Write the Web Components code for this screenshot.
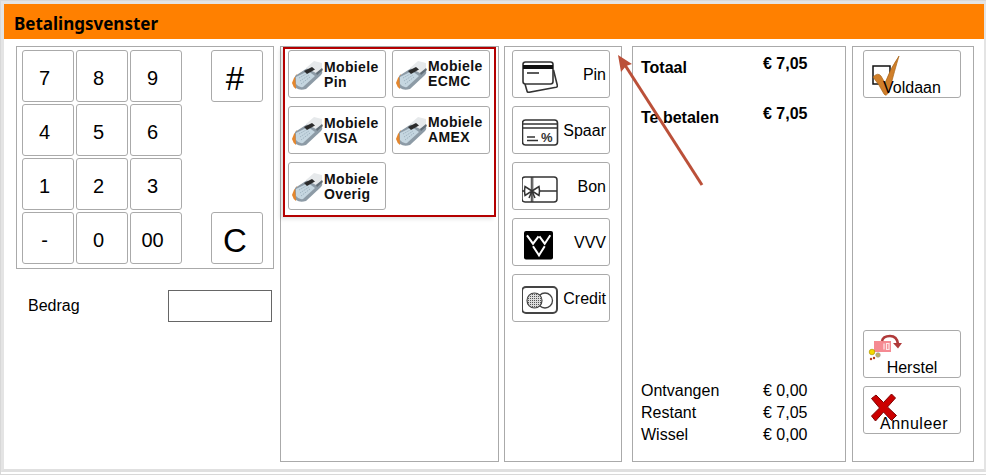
<!DOCTYPE html>
<html>
<head>
<meta charset="utf-8">
<title>Betalingsvenster</title>
<style>
  html, body { margin: 0; background: #fff; height: 100%; overflow: hidden; }
  body { font-family: "Liberation Sans", Arial, sans-serif; color: #000; }
</style>
</head>
<body>

<pay-window title-text="Betalingsvenster">
  <pay-panel style="width:258px">
    <key-pad></key-pad>
    <amount-field slot="after" label="Bedrag"></amount-field>
  </pay-panel>

  <pay-panel style="width:219px; margin-left:6px">
    <mobile-group>
      <mobile-button line="Pin"></mobile-button>
      <mobile-button line="ECMC" nudge></mobile-button>
      <mobile-button line="VISA"></mobile-button>
      <mobile-button line="AMEX" nudge></mobile-button>
      <mobile-button line="Overig"></mobile-button>
    </mobile-group>
  </pay-panel>

  <pay-panel style="width:118px; margin-left:5px">
    <method-list>
      <method-button label="Pin">
        <svg slot="icon" style="margin-top:10px" width="36" height="32" viewBox="0 0 36 32" fill="none" stroke="#333" stroke-width="1.600">
          <path d="M3 23l2 7q.4 1.600 2 1.300l27-5q1.700-.4 1.300-2L31.500 9"/>
          <rect x="1" y="1" width="30" height="22" rx="2.500" fill="#fff"/>
          <rect x="1" y="4" width="30" height="4" fill="#111" stroke="none"/>
          <path d="M5 12h12"/>
        </svg>
      </method-button>
      <method-button label="Spaar">
        <svg slot="icon" style="margin-top:12px" width="38" height="28" viewBox="0 0 38 28" fill="none" stroke="#333" stroke-width="1.600">
          <rect x=".5" y="1" width="35" height="25" rx="3"/>
          <path d="M.5 5h35M.5 9h35"/>
          <path d="M5 18h8M5 21.500h11" stroke-width="1.300"/>
          <text x="19" y="23" font-family="Liberation Sans" font-weight="700" font-size="13" fill="#333" stroke="none">%</text>
        </svg>
      </method-button>
      <method-button label="Bon">
        <svg slot="icon" style="margin-top:13px" width="38" height="28" viewBox="0 0 38 28" fill="none" stroke="#333" stroke-width="1.500">
          <rect x="0" y="1" width="35" height="25" rx="3"/>
          <path d="M9.300 1v25M10.800 1v25" stroke-width="1"/>
          <path d="M18 15h17M0 15h3"/>
          <path d="M10 15L3 10.500q-1 4.500 0 9zM10 15l7-4.500q1 4.500 0 9zM10 15l-3 7M10 15l3 7" fill="#fff"/>
        </svg>
      </method-button>
      <method-button label="VVV">
        <svg slot="icon" style="margin-top:12px" width="38" height="30" viewBox="0 0 38 30">
          <rect x="2" y="0" width="29" height="28.500" rx="2" fill="#000"/>
          <g fill="none" stroke="#fff" stroke-width="2">
            <path d="M5 4.300l6 8.400 5.600-7.400"/>
            <path d="M17.400 5.300l5.300 7.400 5.600-8.400"/>
            <path d="M11 15.300l6 9 5.700-9"/>
          </g>
        </svg>
      </method-button>
      <method-button label="Credit">
        <svg slot="icon" style="margin-top:11px" width="38" height="28" viewBox="0 0 38 28" fill="none">
          <defs>
            <pattern id="dots" width="2" height="2" patternUnits="userSpaceOnUse">
              <rect width="2" height="2" fill="#ddd"/>
              <rect width="1" height="1" fill="#555"/>
            </pattern>
          </defs>
          <rect x="0" y="1" width="35" height="26" rx="4" stroke="#444" stroke-width="2"/>
          <circle cx="23" cy="14.500" r="7.500" stroke="#444" stroke-width="1.300"/>
          <circle cx="12.500" cy="14.500" r="7.500" fill="url(#dots)" stroke="#444" stroke-width="1.200"/>
        </svg>
      </method-button>
    </method-list>
  </pay-panel>

  <pay-panel style="width:214px; margin-left:10px">
    <pay-summary></pay-summary>
  </pay-panel>

  <pay-panel style="width:122px; margin-left:6px">
    <action-list>
      <action-button label="Voldaan">
        <svg slot="icon" width="36" height="44" viewBox="0 0 36 44">
          <rect x="2" y="13" width="17" height="18" fill="#fff" stroke="#111" stroke-width="1.500"/>
          <path d="M2 24Q7 19 10 23L14 30Q20 14 28 3Q24 16 18 39Q15 44 13 41Q8 31 2 24z" fill="#d07f2a" stroke="#a86418" stroke-width=".7"/>
        </svg>
      </action-button>
      <action-button slot="bottom" label="Herstel">
        <svg slot="icon" width="36" height="36" viewBox="0 0 36 36" style="overflow:visible">
          <rect x="3" y="8" width="17" height="11" fill="#f58a92"/>
          <path d="M13 10.500v6M15.500 10.500h2.500v6h-2.500z" fill="none" stroke="#fde6e8" stroke-width="1.200"/>
          <path d="M11 8Q12 3 19 3Q26 3 27 11" fill="none" stroke="#b03a3a" stroke-width="2.600"/>
          <path d="M22 10h9l-4 5.500z" fill="#b03a3a"/>
          <circle cx="1" cy="19" r="2.800" fill="#f5d800" stroke="#a08a00" stroke-width=".6"/>
          <circle cx="7" cy="22" r="2.300" fill="#c0b060" stroke="#999" stroke-width=".6"/>
          <circle cx="0" cy="26" r="1.200" fill="#b33c1d"/>
          <circle cx="3" cy="25" r="1.200" fill="#b33c1d"/>
        </svg>
      </action-button>
      <action-button slot="bottom" label="Annuleer" spaced>
        <svg slot="icon" width="36" height="36" viewBox="0 0 36 36">
          <path transform="translate(-2.500 4)" d="M3 5.500L7.500 2 15 9.500 23 1l4 4-8 9 9 8.500-5 5-8-8.500-8 9-4-5 8-8z" fill="#cc0000" stroke="#7e0000" stroke-width="1"/>
        </svg>
      </action-button>
    </action-list>
  </pay-panel>

  <pay-arrow slot="overlay"></pay-arrow>
</pay-window>

<script>
class PayWindow extends HTMLElement {
  constructor() {
    super();
    this.attachShadow({ mode: "open" });
    this.shadowRoot.innerHTML = `
    <style>
      :host {
        display: block;
        width: 986px;
        height: 475px;
        box-sizing: border-box;
        position: relative;
        border: 1px solid #d8d8d8;
        border-right: none;
        background: #fff;
      }
      #inner {
        height: 471px;
        box-sizing: border-box;
        border: 3px solid #e4e4e4;
        border-right-width: 2px;
        border-bottom: 3px solid #e0e0e0;
        display: flex;
        flex-direction: column;
      }
      header {
        background: #ff8000;
        height: 35px;
        flex: none;
        padding-left: 10px;
        font: 700 17px/40px "Noto Sans", Tahoma, sans-serif;
        color: #000;
      }
      #panels {
        display: flex;
        padding: 7px 0 0 12px;
      }
    </style>
    <div id="inner">
      <header></header>
      <div id="panels"><slot></slot></div>
    </div>
    <slot name="overlay"></slot>
    `;
    this.shadowRoot.querySelector("header").textContent = this.getAttribute("title-text");
  }
}

class PayPanel extends HTMLElement {
  constructor() {
    super();
    this.attachShadow({ mode: "open" });
    this.shadowRoot.innerHTML = `
    <style>
      :host { display: flex; flex-direction: column; flex: none; }
      #box { flex: none; border: 1px solid #aaa; }
      :host(:not(:first-child)) #box { height: 414px; }
    </style>
    <div id="box"><slot></slot></div>
    <slot name="after"></slot>
    `;
  }
}

class KeyPad extends HTMLElement {
  constructor() {
    super();
    this.attachShadow({ mode: "open" });
    this.shadowRoot.innerHTML = `
    <style>
      :host {
        display: grid;
        grid-template-columns: 52px 52px 52px 1fr;
        grid-auto-rows: 52px;
        gap: 2px;
        padding: 3px 4px 4px 5px;
      }
      .side { margin-left: 27px; }
    </style>
    `;
    const keys = ["7", "8", "9", "#", "4", "5", "6", "", "1", "2", "3", "", "-", "0", "00", "C"];
    keys.forEach((k) => {
      if (k === "") {
        this.shadowRoot.appendChild(document.createElement("span"));
        return;
      }
      const key = document.createElement("pad-key");
      key.textContent = k;
      if (k === "#" || k === "C") {
        key.setAttribute("big", "");
        key.className = "side";
      }
      this.shadowRoot.appendChild(key);
    });
  }
}

class PadKey extends HTMLElement {
  constructor() {
    super();
    this.attachShadow({ mode: "open" });
    this.shadowRoot.innerHTML = `
    <style>
      :host {
        display: flex;
        width: 52px;
        height: 52px;
        box-sizing: border-box;
        align-items: center;
        justify-content: center;
        border: 1px solid #aaa;
        border-radius: 3px;
        background: #fff;
        font-size: 20px;
        padding: 4px 7px 0 0;
      }
      :host([big]) { font-size: 33px; padding: 5px 4px 0 0; }
    </style>
    <slot></slot>
    `;
  }
}

class AmountField extends HTMLElement {
  constructor() {
    super();
    this.attachShadow({ mode: "open" });
    this.shadowRoot.innerHTML = `
    <style>
      :host {
        display: flex;
        align-items: center;
        justify-content: space-between;
        width: 244px;
        margin: 21px 0 0 12px;
        font-size: 16px;
      }
      #value {
        width: 102px;
        height: 30px;
        border: 1px solid #666;
        background: #fff;
      }
    </style>
    <label></label>
    <div id="value"></div>
    `;
    this.shadowRoot.querySelector("label").textContent = this.getAttribute("label");
  }
}

class MobileGroup extends HTMLElement {
  constructor() {
    super();
    this.attachShadow({ mode: "open" });
    this.shadowRoot.innerHTML = `
    <style>
      :host {
        display: grid;
        grid-template-columns: 98px 98px;
        grid-auto-rows: 48px;
        column-gap: 6px;
        row-gap: 8px;
        width: 213px;
        height: 170px;
        box-sizing: border-box;
        margin: 0 0 0 2px;
        padding: 1px 0 0 3px;
        border: 2px solid #b40000;
        box-shadow: -3px 2px 4px rgba(0,0,0,0.12);
      }
    </style>
    <slot></slot>
    `;
  }
}

class MobileButton extends HTMLElement {
  constructor() {
    super();
    this.attachShadow({ mode: "open" });
    this.shadowRoot.innerHTML = `
    <style>
      :host {
        display: flex;
        align-items: center;
        box-sizing: border-box;
        width: 98px;
        height: 48px;
        padding: 2px 0 0 2px;
        border: 1px solid #aaa;
        border-radius: 3px;
        background: #fff;
      }
      svg { flex: none; margin: 2px 1px 0 0; }
      #text {
        font-weight: 700;
        font-size: 14px;
        line-height: 15px;
        letter-spacing: .35px;
        color: #111;
      }
      :host([nudge]) #text { margin-top: -2px; }
    </style>
    <svg width="32" height="30" viewBox="0 0 32 30">
      <path d="M1 22Q2 17 6 13L6 16 5 28Q2 26 1 22z" fill="#e5862c"/>
      <path d="M4 15L21 4 31 9Q32 12 30 14L15 28Q9 30 5 27z" fill="#8d9ba6"/>
      <path d="M5 16L17 10 24 15 12 26Q8 27 5 23z" fill="#c5d6e0"/>
      <path d="M8 17l8-4.500M9 20l9-6M10 23l9-7" stroke="#9fb3c0" stroke-width="1" stroke-dasharray="1.500 1" fill="none"/>
      <path d="M15 7L23 0 31 2 31 8 25 12z" fill="#e6e9eb"/>
      <path d="M13 10L21 6 24 8.500 16 13z" fill="#2b2b2b"/>
      <path d="M25 12L31 7 32 9 26 14z" fill="#626e77"/>
    </svg>
    <div id="text">Mobiele<br><span id="line"></span></div>
    `;
    this.shadowRoot.querySelector("#line").textContent = this.getAttribute("line");
  }
}

class MethodList extends HTMLElement {
  constructor() {
    super();
    this.attachShadow({ mode: "open" });
    this.shadowRoot.innerHTML = `
    <style>
      :host {
        display: flex;
        flex-direction: column;
        gap: 8px;
        padding: 3px 0 0 7px;
      }
    </style>
    <slot></slot>
    `;
  }
}

class MethodButton extends HTMLElement {
  constructor() {
    super();
    this.attachShadow({ mode: "open" });
    this.shadowRoot.innerHTML = `
    <style>
      :host {
        display: flex;
        align-items: center;
        justify-content: space-between;
        box-sizing: border-box;
        width: 98px;
        height: 48px;
        padding: 0 3px 0 9px;
        border: 1px solid #aaa;
        border-radius: 3px;
        background: #fff;
        font-size: 16px;
      }
      #icon { display: flex; align-items: flex-start; width: 38px; height: 46px; }
      #label { padding-top: 2px; }
    </style>
    <div id="icon"><slot name="icon"></slot></div>
    <span id="label"></span>
    `;
    this.shadowRoot.querySelector("#label").textContent = this.getAttribute("label");
  }
}

class PaySummary extends HTMLElement {
  constructor() {
    super();
    this.attachShadow({ mode: "open" });
    this.shadowRoot.innerHTML = `
    <style>
      :host {
        display: flex;
        flex-direction: column;
        justify-content: space-between;
        height: 414px;
        box-sizing: border-box;
        padding: 8px 0 15px 8px;
        font-size: 16px;
      }
      .row {
        display: grid;
        grid-template-columns: 122px auto;
      }
      #top { display: grid; row-gap: 28px; font-weight: 700; }
      #top .row { height: 22px; }
      #top .row b { padding-top: 4px; }
      #bottom { display: grid; grid-auto-rows: 22px; }
      #bottom .row { line-height: 22px; }
    </style>
    <div id="top">
      <div class="row"><b>Totaal</b><span>€ 7,05</span></div>
      <div class="row"><b>Te betalen</b><span>€ 7,05</span></div>
    </div>
    <div id="bottom">
      <div class="row"><span>Ontvangen</span><span>€ 0,00</span></div>
      <div class="row"><span>Restant</span><span>€ 7,05</span></div>
      <div class="row"><span>Wissel</span><span>€ 0,00</span></div>
    </div>
    `;
  }
}

class ActionList extends HTMLElement {
  constructor() {
    super();
    this.attachShadow({ mode: "open" });
    this.shadowRoot.innerHTML = `
    <style>
      :host {
        display: flex;
        flex-direction: column;
        justify-content: space-between;
        height: 414px;
        box-sizing: border-box;
        padding: 3px 0 27px 10px;
      }
      #bottom { display: flex; flex-direction: column; gap: 8px; }
    </style>
    <div><slot></slot></div>
    <div id="bottom"><slot name="bottom"></slot></div>
    `;
  }
}

class ActionButton extends HTMLElement {
  constructor() {
    super();
    this.attachShadow({ mode: "open" });
    this.shadowRoot.innerHTML = `
    <style>
      :host {
        display: flex;
        align-items: flex-end;
        justify-content: center;
        position: relative;
        box-sizing: border-box;
        width: 98px;
        height: 48px;
        border: 1px solid #aaa;
        border-radius: 3px;
        background: #fff;
        font-size: 16px;
        line-height: 18px;
      }
      :host([spaced]) { padding-left: 4px; }
      :host([spaced]) #label { letter-spacing: .5px; }
      #icon { position: absolute; left: 7px; top: 2px; }
      #label { position: relative; }
    </style>
    <div id="icon"><slot name="icon"></slot></div>
    <span id="label"></span>
    `;
    this.shadowRoot.querySelector("#label").textContent = this.getAttribute("label");
  }
}

class PayArrow extends HTMLElement {
  constructor() {
    super();
    this.attachShadow({ mode: "open" });
    this.shadowRoot.innerHTML = `
    <style>
      :host { position: absolute; left: -1px; top: -1px; pointer-events: none; }
      svg { display: block; }
    </style>
    <svg width="986" height="475" viewBox="0 0 986 475">
      <path d="M702 185L623 62" stroke="#bb5039" stroke-width="3" fill="none"/>
      <path d="M618 55l14 9-6 2-5 6z" fill="#bb5039"/>
    </svg>
    `;
  }
}

customElements.define("pay-window", PayWindow);
customElements.define("pay-panel", PayPanel);
customElements.define("key-pad", KeyPad);
customElements.define("pad-key", PadKey);
customElements.define("amount-field", AmountField);
customElements.define("mobile-group", MobileGroup);
customElements.define("mobile-button", MobileButton);
customElements.define("method-list", MethodList);
customElements.define("method-button", MethodButton);
customElements.define("pay-summary", PaySummary);
customElements.define("action-list", ActionList);
customElements.define("action-button", ActionButton);
customElements.define("pay-arrow", PayArrow);
</script>
</body>
</html>
